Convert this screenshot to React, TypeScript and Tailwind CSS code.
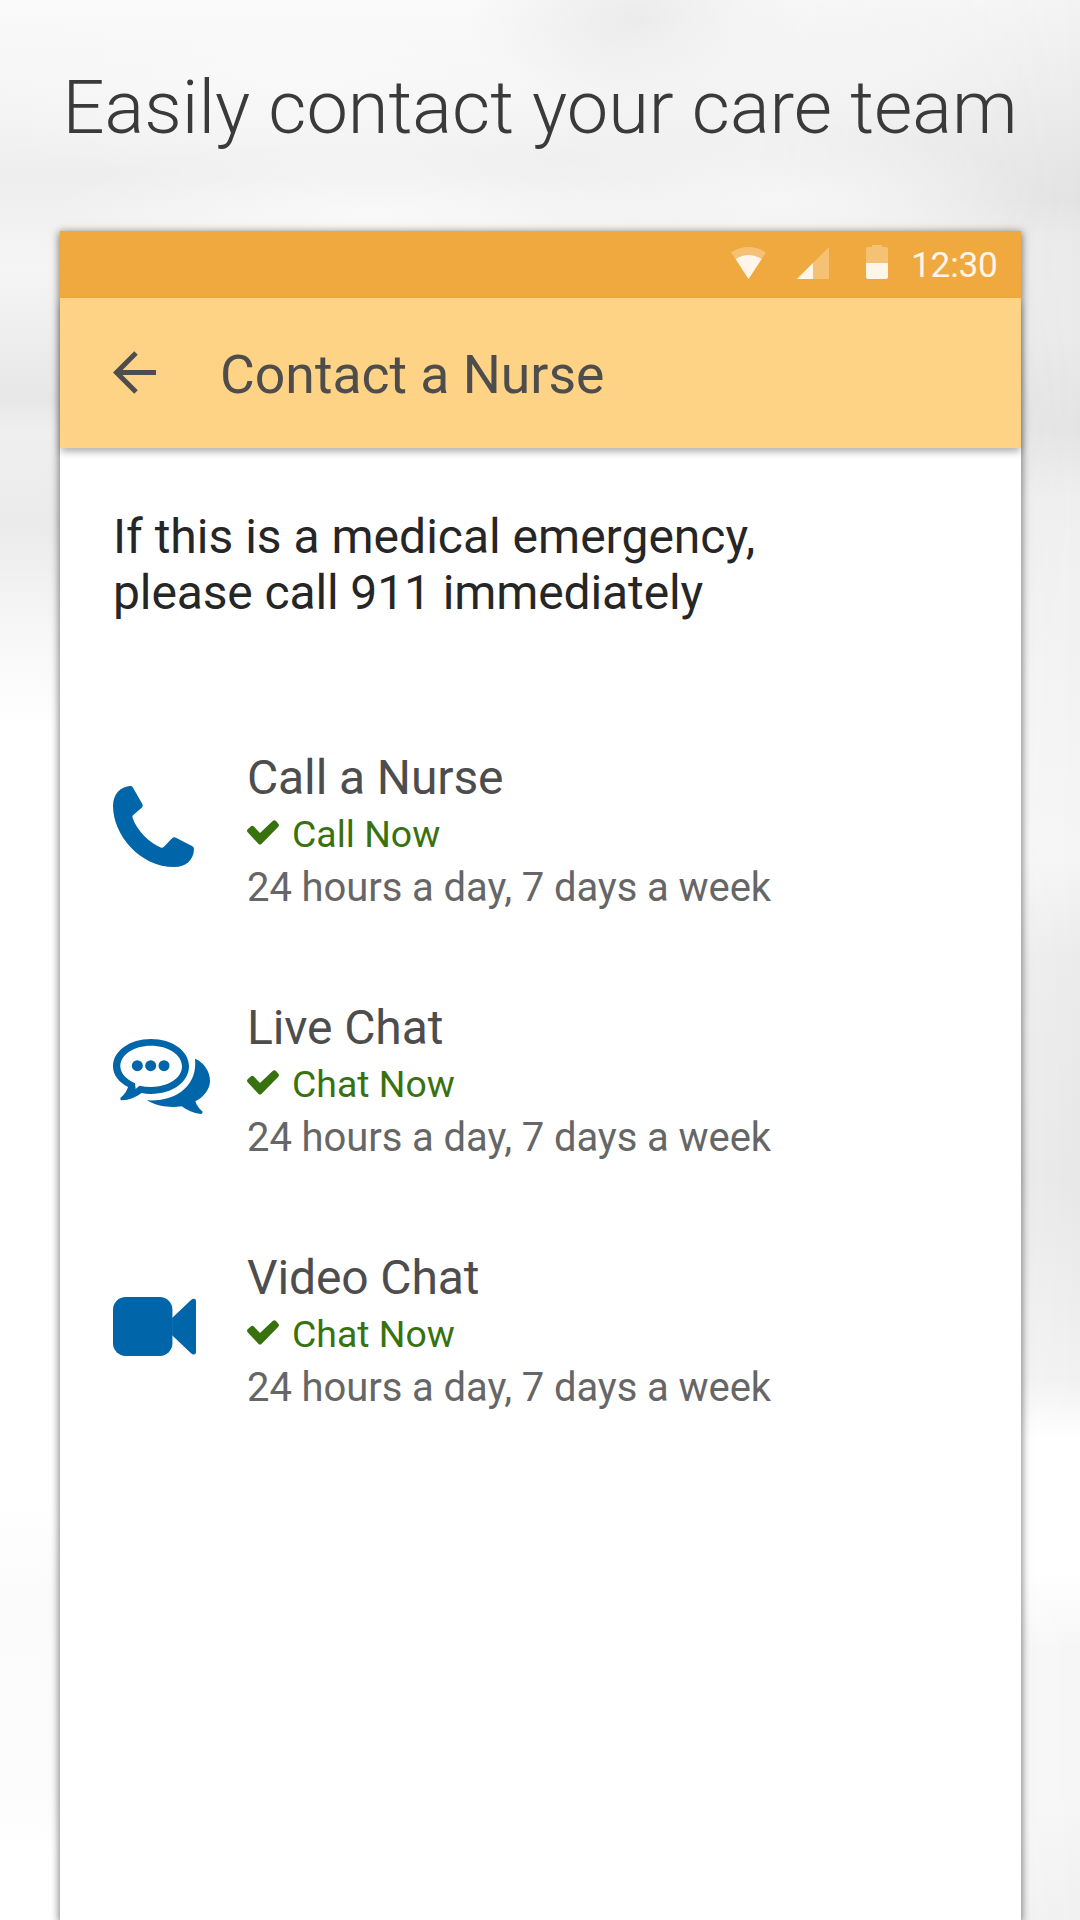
import React from "react";

function PhoneIcon() {
  return (
    <svg className="h-[81px] w-[81px] text-[#0065a9]" viewBox="69 138 243 243" fill="currentColor">
      <path d="M119 138 Q126 137 129 143 L157 192 Q160 198 155 203 L129 226 Q126 229 128 234 C140 272 180 310 214 323 Q218 324 222 320 L247 294 Q252 290 258 293 L306 318 Q312 321 312 327 C311 360 288 381 253 381 C151 381 69 286 69 197 C70 163 89 141 119 138Z" />
    </svg>
  );
}

function ChatIcon() {
  return (
    <svg className="h-[75px] w-[97px] text-[#0065a9]" viewBox="69 147 291 225" fill="currentColor">
      <path fillRule="evenodd" d="M183 147 C247 147 297 183 297 229 C297 276 247 312 183 312 Q168 312 155 309 C137 322 116 330 97 331 Q90 331 91 324 C105 312 110 303 114 291 C85 276 69 254 69 229 C69 183 119 147 183 147Z M183 167 C131 167 91 194 91 229 C91 250 109 269 135 280 L137 297 L148 287 Q165 291 183 291 C235 291 276 264 276 229 C276 194 235 167 183 167Z" />
      <circle cx="142" cy="227" r="16.5" />
      <circle cx="182" cy="227" r="16.5" />
      <circle cx="222" cy="227" r="16.5" />
      <path d="M315 206 C342 217 360 244 360 272 C360 298 342 320 316 334 C320 347 327 356 337 364 Q339 372 332 372 C310 370 291 361 275 349 C238 355 196 347 171 331 C260 336 324 285 315 206Z" />
    </svg>
  );
}

function VideoIcon() {
  return (
    <svg className="h-[59px] w-[83px] text-[#0065a9]" viewBox="69 171 250 177" fill="currentColor">
      <rect x="69" y="171" width="179" height="177" rx="38" />
      <path d="M247 234 L304 180 Q308 176 312 176 Q319 176 319 183 V337 Q319 344 312 344 Q308 344 304 340 L247 286Z" />
    </svg>
  );
}

function CheckIcon() {
  return (
    <svg className="mb-[3px] h-[25px] w-8 shrink-0" viewBox="471 239 96 75" fill="currentColor">
      <path d="M473 267 L483 258 Q487 255 491 258 L510 278 L548 242 Q553 238 558 242 L565 250 Q569 254 565 259 L515 310 Q510 315 505 310 L473 276 Q469 271 473 267Z" />
    </svg>
  );
}

const contacts = [
  { title: "Call a Nurse", action: "Call Now", icon: <PhoneIcon />, pad: "pt-[36px]" },
  { title: "Live Chat", action: "Chat Now", icon: <ChatIcon />, pad: "pt-[39px]" },
  { title: "Video Chat", action: "Chat Now", icon: <VideoIcon />, pad: "pt-[47px]" },
];

function StatusBar() {
  return (
    <div className="flex h-[67px] items-start bg-[#f0a93e] pl-[671px] text-[#fff5e9]">
      <svg className="mt-4 h-8 w-[35px]" viewBox="93 96 105 96" fill="currentColor">
        <path opacity=".32" d="M93 112 Q145 80 198 112 L145.500 192Z" />
        <path d="M107 132 Q145 108 185 132 L145.500 192Z" />
      </svg>
      <svg className="mt-4 ml-[31px] h-8 w-8" viewBox="0 0 32 32" fill="currentColor">
        <path opacity=".32" d="M0 32 L32 0V32Z" />
        <path d="M0 32 L16 16V32Z" />
      </svg>
      <svg className="mt-[14px] ml-[37px] h-[34px] w-[22px]" viewBox="0 0 22 34" fill="currentColor">
        <path opacity=".32" d="M6 0H16V2H20Q22 2 22 4V18H0V4Q0 2 2 2H6Z" />
        <path d="M0 18H22V32Q22 34 20 34H2Q0 34 0 32Z" />
      </svg>
      <span className="mt-[13px] ml-[23px] text-[35.200px] leading-[42px] tracking-[-0.200px]">12:30</span>
    </div>
  );
}

export default function App() {
  return (
    <main className="relative isolate flex h-[1920px] w-[1080px] flex-col overflow-hidden bg-[linear-gradient(180deg,#fafafa_0px,#eeeeee_180px,#f5f5f5_268px,#e7e7e7_400px,#efefef_430px,#ebebeb_526px,#f7f7f7_630px,#ffffff_730px,#ffffff_1500px,#fbfbfb_1590px,#fcfcfc_1800px,#ffffff_1850px)] font-[Roboto,sans-serif]">
      <div className="absolute inset-0 -z-10 bg-[linear-gradient(180deg,#f3f3f3_0px,#e9e9e9_122px,#e2e2e2_200px,#e9e9e9_235px,#eaeaea_330px,#e3e3e3_428px,#efefef_500px,#f5f5f5_857px,#ebebeb_955px,#e7e7e7_1180px,#f1f1f1_1380px,#ffffff_1440px,#ffffff_1570px,#f6f6f6_1650px,#f6f6f6_1800px,#f0f0f0_1920px)] [mask-image:linear-gradient(90deg,transparent_70%,black_100%)]" />
      <div className="absolute inset-x-0 top-0 -z-10 h-[231px] bg-[radial-gradient(ellipse_260px_70px_at_780px_200px,#f6f6f6,#f6f6f600),radial-gradient(ellipse_320px_70px_at_370px_215px,#f9f9f9,#f9f9f900),radial-gradient(ellipse_220px_90px_at_820px_60px,#f4f4f4,#f4f4f400),radial-gradient(ellipse_170px_90px_at_640px_20px,#ebebeb,#ebebeb00),radial-gradient(ellipse_420px_110px_at_300px_70px,#f9f9f9,#f9f9f900)]" />
      <h1 className="h-[231px] pt-[64px] text-center text-[74px] leading-[87px] font-light whitespace-nowrap text-[#3a3a3a]">
        Easily contact your care team
      </h1>
      <section className="ml-[60px] flex w-[961px] flex-1 flex-col bg-white shadow-[0_2px_8px_1px_rgba(0,0,0,0.5)]">
        <StatusBar />
        <header className="flex h-[149.500px] items-center bg-[#fed385] text-[#4d4d4d] shadow-[0_5px_7px_-1px_rgba(0,0,0,0.3)]">
          <svg className="ml-[53px] h-[43px] w-[43px]" viewBox="0 0 43 43" fill="none" stroke="currentColor" strokeWidth="5">
            <path d="M43 21.500H4M23 2L3.500 21.500L23 41" />
          </svg>
          <h2 className="ml-[64px] pt-1 text-[53.500px] leading-[64px]">Contact a Nurse</h2>
        </header>
        <p className="mt-[61.500px] ml-[53px] text-[48px] leading-[56px] text-[#262626]">
          If this is a medical emergency,
          <br />
          <span className="tracking-[-0.120px]">please call 911 immediately</span>
        </p>
        <ul className="mt-[129px] ml-[53px]">
          {contacts.map((c) => (
            <li key={c.title} className="flex h-[250px]">
              <div className={"w-[134px] shrink-0 " + c.pad}>{c.icon}</div>
              <div>
                <h3 className="text-[48px] leading-[56px] tracking-[-0.120px] text-[#4d4d4d]">{c.title}</h3>
                <div className="flex h-[56px] items-center gap-[13px] text-[#37720f]">
                  <CheckIcon />
                  <span className="text-[37.400px] leading-[44px]">{c.action}</span>
                </div>
                <p className="text-[40px] leading-[52px] tracking-[-0.090px] text-[#666666]">24 hours a day, 7 days a week</p>
              </div>
            </li>
          ))}
        </ul>
      </section>
    </main>
  );
}
